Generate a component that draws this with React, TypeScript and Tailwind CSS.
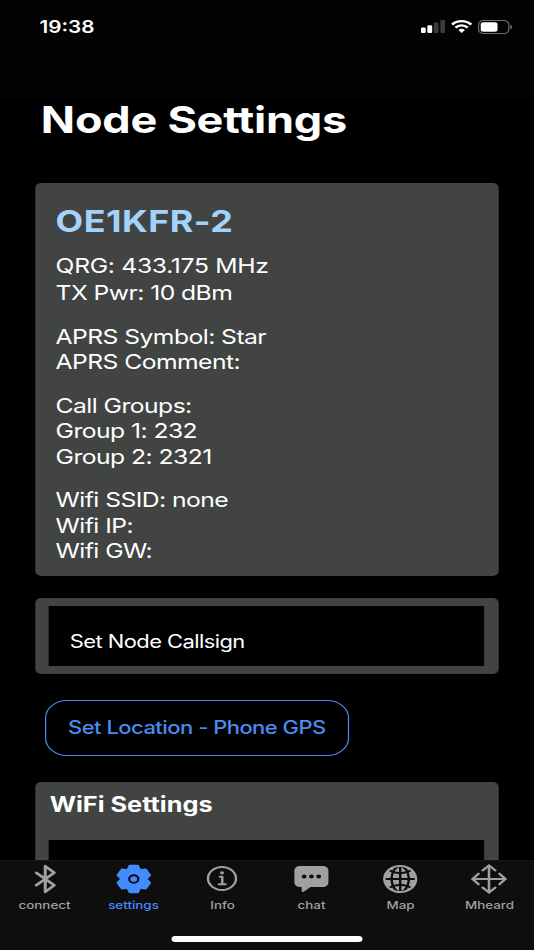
import type { ReactNode } from "react";
import { IoChatboxEllipses, IoGlobe, IoInformationCircleOutline } from "react-icons/io5";

function StatusBar() {
  return (
    <div className="flex h-[98px] shrink-0 items-start justify-between bg-[#030303] pl-[32.5px] pr-[18px] pt-[16px] text-white">
      <span className="mt-px text-[17px] font-semibold leading-[21px]">19:38</span>
      <div className="flex h-[21px] items-center">
        <svg width="20" height="13" viewBox="0 0 20 13" className="mr-[5px]">
          <rect x="0" y="7.5" width="4" height="5.5" rx="1.2" fill="#fff" />
          <rect x="5.3" y="5.2" width="4" height="7.8" rx="1.2" fill="#fff" />
          <rect x="10.6" y="2.6" width="4" height="10.4" rx="1.2" fill="#3a3a3a" />
          <rect x="16" y="0" width="4" height="13" rx="1.2" fill="#3a3a3a" />
        </svg>
        <svg width="17" height="13" viewBox="0 0 17 13" className="mr-[4.5px]">
          <g fill="none" stroke="#fff" strokeWidth="2.3">
            <path d="M0.6 4.6A10.9 10.9 0 0 1 16.4 4.6" />
            <path d="M3.5 7.6A6.9 6.9 0 0 1 13.5 7.6" />
          </g>
          <path d="M5.8 10.1A3.8 3.8 0 0 1 11.2 10.1L8.5 12.9Z" fill="#fff" />
        </svg>
        <svg width="28.5" height="14" viewBox="0 0 28.5 14">
          <rect x="0.5" y="0.5" width="24.8" height="13" rx="4" fill="none" stroke="#6c6c6c" />
          <rect x="2.2" y="2.3" width="13.8" height="9.4" rx="2.2" fill="#fff" />
          <path d="M26.5 4.7Q28.1 5.3 28.1 7T26.5 9.3Z" fill="#6c6c6c" />
        </svg>
      </div>
    </div>
  );
}

function GearIcon({ size }: { size: number }) {
  return (
    <svg width={size} height={size} viewBox="-16.3 -16.3 32.6 32.6" fill="currentColor">
      <g stroke="currentColor" strokeWidth="1.6" strokeLinejoin="round">
        <circle r="7.8" fill="none" strokeWidth="6" />
        {[0, 60, 120, 180, 240, 300].map((angle) => (
          <path key={angle} d="M-3.5 -13.7H3.5L4.8 -10.4L5.3 -8.7H-5.3L-4.8 -10.4Z" transform={`rotate(${angle})`} />
        ))}
      </g>
      <circle r="2.9" />
    </svg>
  );
}

function BluetoothIcon({ size }: { size: number }) {
  return (
    <svg
      width={size}
      height={size}
      viewBox="-16 -16 32 32"
      fill="none"
      stroke="currentColor"
      strokeWidth="2.5"
      strokeLinecap="round"
      strokeLinejoin="round"
    >
      <path d="M-7.2 -6.3L7.6 6.2L0.2 12.9V-12.9L7.6 -6.2L-7.2 6.3" />
    </svg>
  );
}

function MoveIcon({ size }: { size: number }) {
  return (
    <svg
      width={size}
      height={size}
      viewBox="-16 -16 32 32"
      fill="none"
      stroke="currentColor"
      strokeWidth="2.1"
      strokeLinecap="round"
      strokeLinejoin="round"
    >
      <path d="M0 -13.4V13.4M-13.4 0H13.4" />
      <path d="M-5.3 -8.6L0 -13.5L5.3 -8.6M-5.3 8.6L0 13.5L5.3 8.6M-8.6 -5.3L-13.5 0L-8.6 5.3M8.6 -5.3L13.5 0L8.6 5.3" />
    </svg>
  );
}

function Group({ children }: { children: ReactNode }) {
  return <div className="mb-[18px] flex flex-col whitespace-nowrap">{children}</div>;
}

const tabs = [
  { label: "connect", icon: BluetoothIcon },
  { label: "settings", icon: GearIcon, active: true },
  { label: "Info", icon: IoInformationCircleOutline },
  { label: "chat", icon: IoChatboxEllipses },
  { label: "Map", icon: IoGlobe },
  { label: "Mheard", icon: MoveIcon },
];

export default function App() {
  return (
    <div className="h-[950px] w-[534px] overflow-hidden bg-black">
      <div className="flex h-[950px] w-[439px] origin-top-left scale-x-[1.2164] flex-col bg-black font-['Inter',sans-serif] text-white">
        <StatusBar />
        <main className="min-h-0 flex-1 overflow-hidden pl-[28.6px] pr-[29.4px]">
          <h1 className="ml-[5px] whitespace-nowrap text-[37px] font-bold leading-[44px] tracking-[-0.2px]">
            Node Settings
          </h1>

          <section className="mt-[41px] h-[392.5px] rounded-[5px] bg-[#414443] pl-[17.1px] pt-[20px] text-[20.3px] leading-[25.5px] tracking-[-0.45px]">
            <h2 className="mb-[13.5px] text-[29.5px] font-bold leading-[36px] tracking-[0.4px] text-[#a3d3fb]">
              OE1KFR-2
            </h2>
            <Group>
              <span className="mb-[2px] tracking-[-0.25px]">QRG: 433.175 MHz</span>
              <span>TX Pwr: 10 dBm</span>
            </Group>
            <Group>
              <span>APRS Symbol: Star</span>
              <span>APRS Comment:</span>
            </Group>
            <Group>
              <span>Call Groups:</span>
              <span>Group 1: 232</span>
              <span>Group 2: 2321</span>
            </Group>
            <Group>
              <span>Wifi SSID: none</span>
              <span>Wifi IP:</span>
              <span>Wifi GW:</span>
            </Group>
          </section>

          <section className="mt-[22px] h-[76.5px] rounded-[5px] bg-[#414443] px-[11.8px] py-[8.5px]">
            <div className="flex h-[59.5px] items-center bg-black pl-[17px] pt-[11px] text-[18px] leading-[23px] tracking-[-0.45px]">
              Set Node Callsign
            </div>
          </section>

          <button className="ml-[8px] mt-[26px] flex h-[56px] w-[250.5px] items-center justify-center whitespace-nowrap rounded-[18px] border border-[#4a8cf0] pb-[2px] text-[18px] font-medium tracking-[-0.4px] text-[#4a8cf0]">
            Set Location - Phone GPS
          </button>

          <section className="mt-[26px] h-[160px] rounded-[5px] bg-[#414443] px-[11.8px] pt-[10px]">
            <h3 className="ml-[0.5px] text-[20.8px] font-bold leading-[26px]">WiFi Settings</h3>
            <div className="mt-[22px] h-[60px] bg-black" />
          </section>
        </main>

        <nav className="flex h-[90px] shrink-0 flex-col items-center border-t border-[#161616] bg-[#0e0e0e]">
          <div className="flex h-[75px] w-full">
            {tabs.map(({ label, icon: Icon, active }) => (
              <div
                key={label}
                className={`flex flex-1 flex-col items-center pt-[2px] ${active ? "text-[#428cff]" : "text-[#a0a0a0]"}`}
              >
                <Icon size={32} />
                <span className="mt-[3px] text-[11px] font-medium leading-[14px]">{label}</span>
              </div>
            ))}
          </div>
          <div className="h-[5.5px] w-[157px] rounded-full bg-white" />
        </nav>
      </div>
    </div>
  );
}
